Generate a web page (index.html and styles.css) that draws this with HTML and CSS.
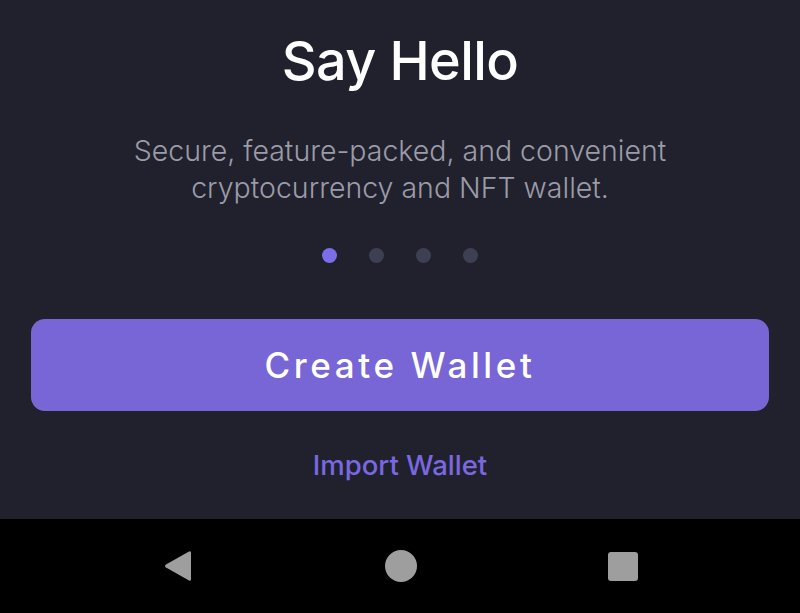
FILE: index.html
```html
<!DOCTYPE html>
<html lang="en">
<head>
    <meta charset="UTF-8">
    <meta name="viewport" content="width=device-width, initial-scale=1.0">
    <title>Say Hello</title>
    <link rel="stylesheet" href="styles.css">
</head>
<body>
<div class="screen">
    <div class="content">
        <h1 class="title">Say Hello</h1>
        <p class="subtitle">Secure, feature-packed, and convenient<br>cryptocurrency and NFT wallet.</p>
        <div class="dots">
            <span class="dot active"></span>
            <span class="dot"></span>
            <span class="dot"></span>
            <span class="dot"></span>
        </div>
        <button class="create-btn">Create Wallet</button>
        <a class="import-link" href="#">Import Wallet</a>
    </div>
    <div class="navbar">
        <svg class="nav-icon" width="32" height="34" viewBox="0 0 32 34">
            <path d="M27 2.5 Q29 1.5 29 4 V30 Q29 32.5 27 31.5 L4 18.5 Q2 17 4 15.5 Z" fill="#9e9e9e"/>
        </svg>
        <span class="nav-home"></span>
        <span class="nav-recent"></span>
    </div>
</div>
</body>
</html>
```

FILE: styles.css
```css
body {
    margin: 0;
    background-color: #20212c;
    font-family: "Inter", "Noto Sans", sans-serif;
}
.screen {
    width: 800px;
    height: 613px;
    display: flex;
    flex-direction: column;
    overflow: hidden;
}
.content {
    flex: 1;
    display: flex;
    flex-direction: column;
    align-items: center;
    padding: 0 31px;
}
.title {
    margin: 28px 0 0;
    color: #ffffff;
    font-size: 54px;
    font-weight: 500;
    line-height: 66px;
    letter-spacing: -0.6px;
}
.subtitle {
    margin: 38px 0 0;
    color: #9b9ba9;
    font-size: 28.5px;
    font-weight: 300;
    line-height: 37px;
    text-align: center;
}
.dots {
    display: flex;
    gap: 32px;
    margin-top: 42px;
}
.dot {
    width: 15px;
    height: 15px;
    border-radius: 50%;
    background-color: #3f3f54;
}
.dot.active {
    background-color: #7b6ee8;
}
.create-btn {
    width: 100%;
    height: 92px;
    margin-top: 56px;
    border: none;
    border-radius: 14px;
    background-color: #7866d6;
    color: #ffffff;
    font-family: inherit;
    font-size: 35px;
    font-weight: 500;
    letter-spacing: 3.6px;
}
.import-link {
    margin-top: 37px;
    color: #7a68e0;
    font-size: 27.5px;
    font-weight: 500;
    text-decoration: none;
}
.navbar {
    height: 94px;
    background-color: #000000;
    display: flex;
    align-items: center;
    justify-content: space-between;
    padding: 0 162px;
}
.nav-icon {
    display: block;
}
.nav-home {
    width: 32px;
    height: 32px;
    border-radius: 50%;
    background-color: #9e9e9e;
}
.nav-recent {
    width: 30px;
    height: 29px;
    border-radius: 3px;
    background-color: #9e9e9e;
}
```
